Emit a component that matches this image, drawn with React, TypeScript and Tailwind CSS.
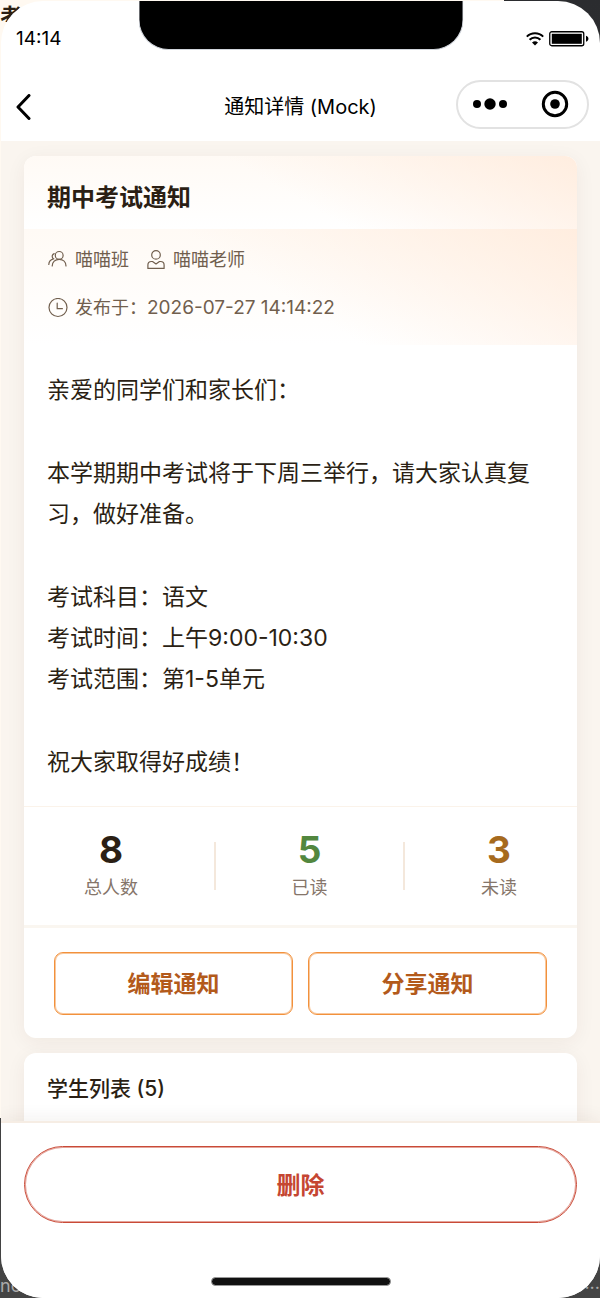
import React from 'react';

const paragraphs = [
  ['亲爱的同学们和家长们：'],
  ['本学期期中考试将于下周三举行，请大家认真复习，做好准备。'],
  ['考试科目：语文', '考试时间：上午9:00-10:30', '考试范围：第1-5单元'],
  ['祝大家取得好成绩！'],
];

const WifiIcon = () => (
  <svg width="18" height="14" viewBox="0 0 18 14" fill="none" stroke="#000" strokeWidth="2" aria-hidden="true">
    <path d="M0.8 4.6a11.6 11.6 0 0 1 16.4 0" />
    <path d="M3.6 7.7a7.6 7.6 0 0 1 10.8 0" />
    <path d="M6 10.6a4.3 4.3 0 0 1 6 0L9 13.6z" fill="#000" stroke="none" />
  </svg>
);

const BatteryIcon = () => (
  <svg width="40" height="16" viewBox="0 0 40 16" aria-hidden="true">
    <rect x="0.75" y="0.75" width="34" height="14" rx="2" fill="none" stroke="#000" strokeWidth="1.3" />
    <rect x="2.8" y="2.8" width="30" height="10" fill="#000" />
    <path d="M37 4.8c3.2 1 3.2 5 0 6z" fill="#000" />
  </svg>
);

const GroupIcon = () => (
  <svg width="19" height="20" viewBox="0 0 19 20" fill="none" stroke="currentColor" strokeWidth="1.2" strokeLinecap="round" aria-hidden="true">
    <circle cx="11.2" cy="5.4" r="3.9" />
    <path d="M4.2 16c0-4 3-6.7 7-6.7s6.8 2.7 6.8 6.7" />
    <path d="M6.200 3.600a3 3 0 0 0-.8 5.200C2.500 9.600.9 11.400.8 14.400" />
  </svg>
);

const PersonIcon = () => (
  <svg width="18" height="20" viewBox="0 0 18 20" fill="none" stroke="currentColor" strokeWidth="1.2" strokeLinejoin="round" aria-hidden="true">
    <circle cx="9" cy="4.900" r="4.300" />
    <path d="M.9 18.400v-3.400c0-2 1.500-3.500 3.500-3.500h1.100L9 14l3.500-2.500h1.100c2 0 3.500 1.500 3.500 3.500v3.400z" />
  </svg>
);

const ClockIcon = () => (
  <svg width="20" height="20" viewBox="0 0 20 20" fill="none" stroke="currentColor" strokeWidth="1.2" strokeLinecap="round" aria-hidden="true">
    <circle cx="10" cy="9.500" r="9" />
    <path d="M9.200 5v5.700h5.200" />
  </svg>
);

const StatusBar = () => (
  <div className="relative flex h-16 items-center justify-between pt-3 pr-[11px] pl-[15px]">
    <span className="text-[19px] leading-6">14:14</span>
    <div className="absolute top-0 left-1/2 h-[49px] w-[325px] -translate-x-1/2 rounded-b-[30px] border border-t-0 border-gray-300 bg-black" />
    <div className="flex items-center gap-[5px]">
      <WifiIcon />
      <BatteryIcon />
    </div>
  </div>
);

const NavBar = () => (
  <header className="grid h-19 grid-cols-[1fr_auto_1fr] items-center px-[11px] pt-2">
    <button type="button" aria-label="返回" className="flex h-10 w-10 items-center pl-1">
      <svg width="15" height="26" viewBox="0 0 15 26" fill="none" stroke="#000" strokeWidth="3" strokeLinecap="round" strokeLinejoin="round" aria-hidden="true">
        <path d="M13 1.500L2 13L13 24.500" />
      </svg>
    </button>
    <h1 className="text-[20px] leading-7">通知详情 (Mock)</h1>
    <div className="mb-1.5 flex h-[49px] w-[133px] items-center justify-self-end rounded-full border-2 border-[#e2e2e2]">
      <button type="button" aria-label="更多" className="flex flex-1 items-center justify-center">
        <svg width="36" height="12" viewBox="0 0 36 12" aria-hidden="true">
          <circle cx="5" cy="6" r="4" />
          <circle cx="18" cy="6" r="5.700" />
          <circle cx="31" cy="6" r="4" />
        </svg>
      </button>
      <button type="button" aria-label="关闭" className="flex flex-1 items-center justify-center">
        <svg width="28" height="28" viewBox="0 0 28 28" aria-hidden="true">
          <circle cx="14" cy="14" r="11.700" fill="none" stroke="#000" strokeWidth="3" />
          <circle cx="14" cy="14" r="4.800" />
        </svg>
      </button>
    </div>
  </header>
);

interface StatProps {
  value: number;
  label: string;
  color: string;
}

const Stat: React.FC<StatProps> = ({ value, label, color }) => (
  <div className="flex flex-col items-center">
    <span className={`text-[37px] leading-10 font-bold ${color}`}>{value}</span>
    <span className="mt-1 text-[18px] leading-7 text-[#85756a]">{label}</span>
  </div>
);

const NoticeCard = () => (
  <article className="overflow-hidden rounded-xl bg-white shadow-[0_4px_20px_rgba(60,40,20,0.06)]">
    <div className="bg-[linear-gradient(210deg,#ffeadacc_0%,#ffeada00_52%),linear-gradient(#fffaf5,#fff)] px-[23px] pt-6 pb-[13px]">
      <h2 className="text-[24px] leading-9 font-bold">期中考试通知</h2>
    </div>
    <div className="flex flex-col gap-5 bg-[linear-gradient(212deg,#ffeadacc_0%,#ffeada00_54%),linear-gradient(#fffaf5,#fff)] px-6 pt-[17px] pb-[23px] text-[18px] leading-7 text-[#715f4e]">
      <div className="flex gap-[18px]">
        <span className="flex items-center gap-2"><GroupIcon />喵喵班</span>
        <span className="flex items-center gap-2"><PersonIcon />喵喵老师</span>
      </div>
      <div className="flex items-center">
        <ClockIcon />
        <span className="pl-[7px]">发布于：</span>
        <time className="text-[19px]">2026-07-27 14:14:22</time>
      </div>
    </div>
    <div className="flex flex-col gap-[42px] px-[23px] pt-[25px] pb-[23px] text-[23px] leading-[41px]">
      {paragraphs.map((lines, i) => (
        <p key={i}>
          {lines.map((line) => <span key={line} className="block">{line}</span>)}
        </p>
      ))}
    </div>
    <div className="flex items-center justify-between border-t border-b-3 border-t-[#fbf3ea] border-b-[#faf6f0] px-[60px] py-[23px]">
      <Stat value={8} label="总人数" color="text-[#2b1f14]" />
      <div className="h-12 w-0.5 bg-[#f4e8dc]" />
      <Stat value={5} label="已读" color="text-[#52873f]" />
      <div className="h-12 w-0.5 bg-[#f4e8dc]" />
      <Stat value={3} label="未读" color="text-[#a66a1e]" />
    </div>
    <div className="flex gap-[15px] px-[30px] pt-6 pb-[23px] text-[23px] font-bold text-[#b35a1b]">
      <button type="button" className="h-[63px] flex-1 rounded-[9px] border border-[#f2913c] pt-0.5 inset-shadow-[0_0_0_1px_#f2913c80]">编辑通知</button>
      <button type="button" className="h-[63px] flex-1 rounded-[9px] border border-[#f2913c] pt-0.5 inset-shadow-[0_0_0_1px_#f2913c80]">分享通知</button>
    </div>
  </article>
);

export default function App() {
  return (
    <div className="relative isolate flex h-screen flex-col overflow-hidden bg-linear-to-b from-[#2b2c2f] to-[#444] pt-px pl-px font-[Inter,'Noto_Sans_CJK_SC',sans-serif] text-[#2b1f14]">
      {/* page behind the phone */}
      <div className="absolute top-0 left-0 -z-10 h-[1118px] w-[504px] bg-[#fff9f1]">
        <span className="absolute top-1 left-0 text-[22px] leading-6 font-bold">考</span>
      </div>
      <span className="absolute bottom-0 left-0 -z-10 text-[18px] leading-6 text-[#aaa]">not</span>
      <span className="absolute right-0 bottom-0 -z-10 text-[18px] leading-5 text-[#aaa]">···</span>

      <div className="flex min-h-0 flex-1 flex-col overflow-hidden rounded-[42px] bg-white">
        <div className="shrink-0 text-black">
          <StatusBar />
          <NavBar />
        </div>
        <main className="flex min-h-0 flex-1 flex-col gap-[15px] overflow-hidden bg-[#faf5ef] px-[23px] pt-[15px] *:shrink-0">
          <NoticeCard />
          <section className="rounded-xl bg-white px-[23px] pt-5 pb-8 shadow-[0_4px_20px_rgba(60,40,20,0.06)]">
            <h2 className="text-[21px] leading-8 font-medium">学生列表 (5)</h2>
          </section>
        </main>
        <footer className="relative flex shrink-0 flex-col items-center border-t-2 border-[#f6ede4] bg-white px-[23px] pt-[23px] pb-3 shadow-[0_-4px_16px_rgba(60,40,20,0.06)]">
          <button type="button" className="h-[77px] w-full rounded-full border border-[#c94a37] pt-0.5 text-[24px] font-bold text-[#c54632] inset-shadow-[0_0_0_1px_#c94a3780]">删除</button>
          <div className="mt-[54px] h-[9px] w-[180px] rounded-full border border-[#999] bg-[#111]" />
        </footer>
      </div>
    </div>
  );
}
